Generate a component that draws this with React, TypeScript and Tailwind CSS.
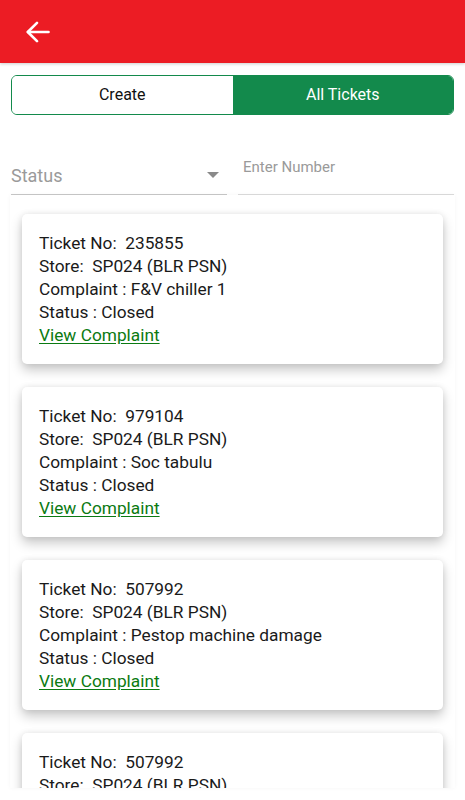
import React from "react";

type Ticket = {
  number: string;
  store: string;
  complaint: string;
  status: string;
};

const tickets: Ticket[] = [
  { number: "235855", store: "SP024 (BLR PSN)", complaint: "F&V chiller 1", status: "Closed" },
  { number: "979104", store: "SP024 (BLR PSN)", complaint: "Soc tabulu", status: "Closed" },
  { number: "507992", store: "SP024 (BLR PSN)", complaint: "Pestop machine damage", status: "Closed" },
  { number: "507992", store: "SP024 (BLR PSN)", complaint: "Pestop machine damage", status: "Closed" },
];

function TicketCard({ ticket }: { ticket: Ticket }) {
  return (
    <article className="h-[150px] shrink-0 rounded-[5px] bg-white px-[17px] pt-[18px] text-[17.3px] leading-[23px] text-[#1a1a1a] shadow-[0_6px_12px_rgba(0,0,0,0.22),0_0_6px_rgba(0,0,0,0.08)]">
      <p className="whitespace-pre">Ticket No:  {ticket.number}</p>
      <p className="whitespace-pre">Store:  {ticket.store}</p>
      <p className="whitespace-pre">Complaint : {ticket.complaint}</p>
      <p className="whitespace-pre">Status : {ticket.status}</p>
      <a href="#" className="text-[#0b7a12] underline underline-offset-2">
        View Complaint
      </a>
    </article>
  );
}

export default function App() {
  return (
    <div className="flex h-[800px] w-[465px] flex-col overflow-hidden bg-white font-['Roboto','Liberation_Sans',sans-serif]">
      <header className="flex h-[63px] shrink-0 items-center bg-[#ec1c24] pl-[26px] shadow-[0_1px_3px_rgba(0,0,0,0.2)]">
        <svg width="24" height="22" viewBox="0 0 24 22" fill="none" stroke="white" strokeWidth="2.6" strokeLinecap="round" strokeLinejoin="round">
          <path d="M22.5 11H2" />
          <path d="M11 1.8L1.8 11l9.2 9.2" />
        </svg>
      </header>

      <div className="mx-[11px] mt-[12px] flex h-[40px] shrink-0 overflow-hidden rounded-[6px] border border-[#138a4c] text-[16px]">
        <button type="button" className="flex-1 bg-white text-[#111]">
          Create
        </button>
        <button type="button" className="flex-1 bg-[#138a4c] text-white">
          All Tickets
        </button>
      </div>

      <div className="mx-[11px] mt-[40px] flex shrink-0 gap-[11px]">
        <div className="flex h-[40px] w-[216px] items-end justify-between border-b border-[#c8c8c8] pb-[6px]">
          <span className="text-[18px] leading-[24px] text-[#9a9a9a]">Status</span>
          <span className="mb-[10px] mr-[8px] h-0 w-0 border-x-[6px] border-t-[6px] border-x-transparent border-t-[#8a8a8a]" />
        </div>
        <div className="flex h-[40px] flex-1 items-start border-b border-[#dcdcdc] pl-[5px] pt-[2px]">
          <span className="text-[15px] leading-[20px] text-[#9a9a9a]">Enter Number</span>
        </div>
      </div>

      <div className="flex min-h-0 flex-1 flex-col pb-[12px]">
        <div className="mx-[10px] flex min-h-0 flex-1 flex-col gap-[23px] overflow-hidden px-[12px] pt-[19px] shadow-[0_0_4px_rgba(0,0,0,0.04)]">
          {tickets.map((ticket, index) => (
            <TicketCard key={index} ticket={ticket} />
          ))}
        </div>
      </div>
    </div>
  );
}
